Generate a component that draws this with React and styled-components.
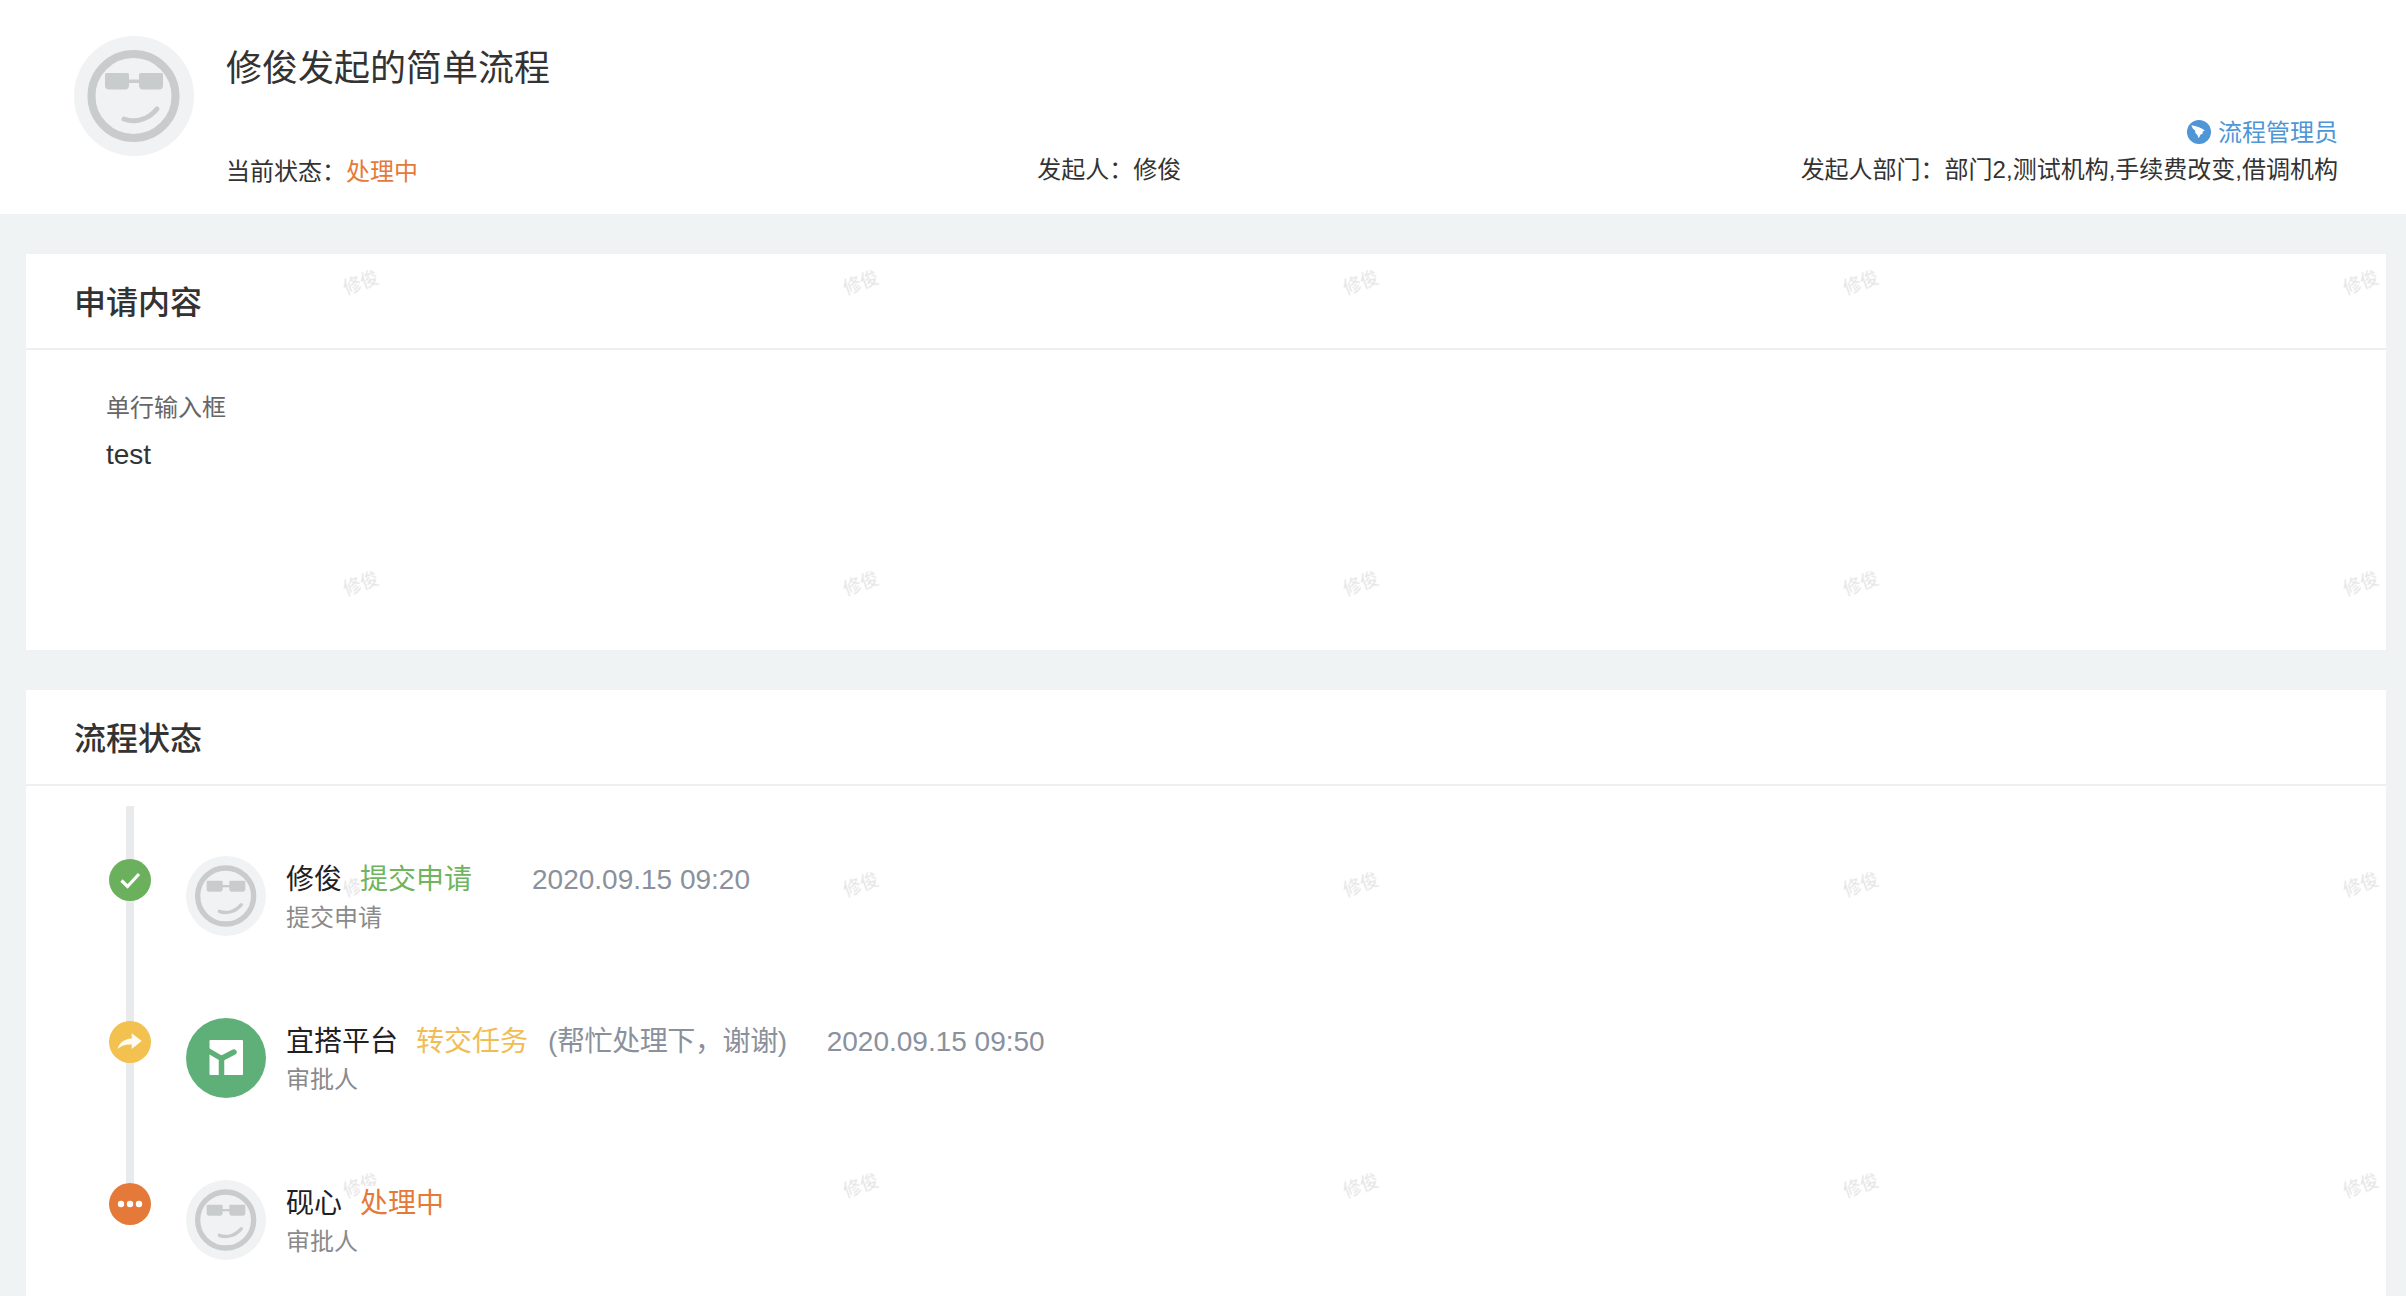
import React from "react";
import styled, { createGlobalStyle } from "styled-components";

const Global = createGlobalStyle`
  html, body { margin: 0; padding: 0; background: #fff; }
  body { font-family: "Liberation Sans", "Noto Sans CJK SC", sans-serif; color: #333; }
  * { box-sizing: border-box; }
`;

const Page = styled.div`
  position: relative;
  height: 100vh;
  overflow: hidden;
  display: flex;
  flex-direction: column;
  background: #f0f3f4;
`;

const Header = styled.header`
  display: flex;
  height: 214px;
  flex: none;
  padding: 36px 68px 0 74px;
  background: #fff;
`;

const HeaderAvatar = styled.div`
  width: 120px;
  height: 120px;
  flex: none;
  margin-right: 32px;
`;

const HeaderInfo = styled.div`
  flex: 1;
  display: flex;
  flex-direction: column;
`;

const Title = styled.h1`
  margin: 13px 0 0;
  font-size: 36px;
  line-height: 40px;
  font-weight: 400;
  color: #333;
`;

const AdminLink = styled.a`
  display: flex;
  align-items: center;
  justify-content: flex-end;
  gap: 7px;
  margin-top: 28px;
  font-size: 24px;
  line-height: 32px;
  color: #4f96d6;
  svg { margin-top: -3px; }
`;

const MetaRow = styled.div`
  display: flex;
  justify-content: space-between;
  margin-top: 5px;
  font-size: 24px;
  line-height: 32px;
  color: #333;
`;

const StatusGroup = styled.span`
  margin-top: 2px;
`;

const StatusText = styled.span`
  color: #e5793a;
`;

const Main = styled.main`
  flex: 1;
  display: flex;
  flex-direction: column;
  gap: 40px;
  padding: 40px 20px 0 26px;
  min-height: 0;
`;

const Card = styled.section`
  background: #fff;
  flex: ${(p) => (p.$grow ? "1" : "none")};
  height: ${(p) => (p.$grow ? "auto" : "396px")};
`;

const CardHeader = styled.div`
  height: 96px;
  display: flex;
  align-items: center;
  padding: 0 0 2px 48px;
  border-bottom: 2px solid #edf0f0;
`;

const CardTitle = styled.h2`
  margin: 0;
  font-size: 32px;
  font-weight: 500;
  color: #333;
`;

const Field = styled.div`
  padding: 42px 0 0 80px;
`;

const FieldLabel = styled.div`
  font-size: 24px;
  line-height: 32px;
  color: #666;
`;

const FieldValue = styled.div`
  margin-top: 11px;
  font-size: 28px;
  line-height: 40px;
  color: #333;
`;

const Timeline = styled.div`
  position: relative;
  padding: 70px 0 0 83px;
  &::before {
    content: "";
    position: absolute;
    left: 100px;
    top: 20px;
    width: 8px;
    height: 377px;
    background: #e8eaec;
  }
`;

const Row = styled.div`
  display: flex;
  height: 162px;
`;

const Dot = styled.div`
  position: relative;
  flex: none;
  width: 42px;
  height: 42px;
  margin: 3px 35px 0 0;
  border-radius: 50%;
  background: ${(p) => p.$color};
  display: flex;
  align-items: center;
  justify-content: center;
`;

const PersonAvatar = styled.div`
  width: 80px;
  height: 80px;
  flex: none;
  margin-right: 20px;
`;

const RowText = styled.div`
  padding-top: 6px;
`;

const NameLine = styled.div`
  display: flex;
  font-size: 28px;
  line-height: 36px;
  color: #1f2022;
`;

const Action = styled.span`
  position: relative;
  z-index: 2;
  margin-left: 18px;
  background: #fff;
  color: ${(p) => p.$color};
`;

const Comment = styled.span`
  position: relative;
  z-index: 2;
  margin-left: 20px;
  letter-spacing: -0.4px;
  color: #8a919c;
`;

const Time = styled.span`
  position: relative;
  z-index: 2;
  margin-left: 40px;
  color: #8a919c;
`;

const SubLine = styled.div`
  margin-top: 4px;
  font-size: 24px;
  line-height: 32px;
  color: #8a8a8a;
`;

const WatermarkLayer = styled.div`
  position: absolute;
  inset: 0;
  z-index: 1;
  pointer-events: none;
  display: grid;
  grid-template-columns: repeat(5, 500px);
  grid-auto-rows: 301px;
  padding: 132px 0 0 111px;
`;

const Watermark = styled.span`
  place-self: center;
  transform: rotate(-20deg);
  font-size: 18px;
  line-height: 24px;
  font-weight: 500;
  color: rgba(0, 0, 0, 0.1);
  filter: blur(0.6px);
`;

const Smiley = () => (
  <svg viewBox="0 0 120 120" width="100%" height="100%">
    <circle cx="60" cy="60" r="60" fill="#f1f2f3" />
    <circle cx="59.5" cy="60" r="42" fill="none" stroke="#c9cccd" strokeWidth="8" />
    <path d="M31 38.5q0-1.500 1.500-1.500h21q1.500 0 1.500 1.500v11q0 4-4 4H35q-4 0-4-4z" fill="#c9cccd" />
    <path d="M65 38.500q0-1.500 1.500-1.500h21q1.500 0 1.500 1.500v11q0 4-4 4H69q-4 0-4-4z" fill="#c9cccd" />
    <rect x="54" y="43.500" width="12" height="3.500" fill="#c9cccd" />
    <path d="M50 83C61 87 74 84 83 73" fill="none" stroke="#c9cccd" strokeWidth="5" strokeLinecap="round" />
  </svg>
);

const PlatformLogo = () => (
  <svg viewBox="0 0 80 80" width="100%" height="100%">
    <circle cx="40" cy="40" r="40" fill="#5fb078" />
    <rect x="23.500" y="22" width="33.500" height="35" rx="1" fill="#fff" />
    <path d="M21 32L35.500 40.500V59" fill="none" stroke="#5fb078" strokeWidth="5.500" />
    <path d="M35.500 40.500L48 34" fill="none" stroke="#5fb078" strokeWidth="5.500" strokeLinecap="round" />
  </svg>
);

const CheckIcon = () => (
  <svg viewBox="0 0 42 42" width="42" height="42">
    <path d="M12.500 21.500L18.500 27.500L30 15" fill="none" stroke="#fff" strokeWidth="3.200" />
  </svg>
);

const ForwardIcon = () => (
  <svg viewBox="0 0 42 42" width="42" height="42">
    <path d="M8.500 28C10 22 15 18 22.700 17.500V12.300L32.700 20L22.700 28V23.500C16 23 12 25 8.500 28Z" fill="#fff" fillOpacity="0.92" />
  </svg>
);

const MoreIcon = () => (
  <svg viewBox="0 0 42 42" width="42" height="42">
    <circle cx="12" cy="21" r="3.200" fill="#fff" />
    <circle cx="21" cy="21" r="3.200" fill="#fff" />
    <circle cx="30" cy="21" r="3.200" fill="#fff" />
  </svg>
);

const WingIcon = () => (
  <svg viewBox="0 0 24 24" width="24" height="24">
    <circle cx="12" cy="12" r="12" fill="#4f96d6" />
    <path d="M4.300 5.300C9 6 14 7.500 17.700 10.300L15.700 11.800L15.500 14L13.800 14.300L11.700 18.300L10.500 15.300L8.500 13L8 10.500L5.800 8.500Z" fill="#fff" />
  </svg>
);

const rows = [
  { name: "修俊", action: "提交申请", color: "#6fb45e", dot: "#6bb05c", Icon: CheckIcon, Avatar: Smiley, time: "2020.09.15 09:20", comment: "", sub: "提交申请" },
  { name: "宜搭平台", action: "转交任务", color: "#f0bd55", dot: "#f2c150", Icon: ForwardIcon, Avatar: PlatformLogo, time: "2020.09.15 09:50", comment: "(帮忙处理下，谢谢)", sub: "审批人" },
  { name: "砚心", action: "处理中", color: "#e5793a", dot: "#e5793a", Icon: MoreIcon, Avatar: Smiley, sub: "审批人" },
];

export default function App() {
  return (
    <Page>
      <Global />
      <Header>
        <HeaderAvatar><Smiley /></HeaderAvatar>
        <HeaderInfo>
          <Title>修俊发起的简单流程</Title>
          <AdminLink><WingIcon />流程管理员</AdminLink>
          <MetaRow>
            <StatusGroup>当前状态：<StatusText>处理中</StatusText></StatusGroup>
            <span>发起人：修俊</span>
            <span>发起人部门：部门2,测试机构,手续费改变,借调机构</span>
          </MetaRow>
        </HeaderInfo>
      </Header>
      <Main>
        <Card>
          <CardHeader><CardTitle>申请内容</CardTitle></CardHeader>
          <Field>
            <FieldLabel>单行输入框</FieldLabel>
            <FieldValue>test</FieldValue>
          </Field>
        </Card>
        <Card $grow>
          <CardHeader><CardTitle>流程状态</CardTitle></CardHeader>
          <Timeline>
            {rows.map((r) => (
              <Row key={r.name}>
                <Dot $color={r.dot}><r.Icon /></Dot>
                <PersonAvatar><r.Avatar /></PersonAvatar>
                <RowText>
                  <NameLine>
                    {r.name}
                    <Action $color={r.color}>{r.action}</Action>
                    {r.time && <Comment>{r.comment}</Comment>}
                    {r.time && <Time>{r.time}</Time>}
                  </NameLine>
                  <SubLine>{r.sub}</SubLine>
                </RowText>
              </Row>
            ))}
          </Timeline>
        </Card>
      </Main>
      <WatermarkLayer>
        {Array.from({ length: 20 }, (_, i) => <Watermark key={i}>修俊</Watermark>)}
      </WatermarkLayer>
    </Page>
  );
}
